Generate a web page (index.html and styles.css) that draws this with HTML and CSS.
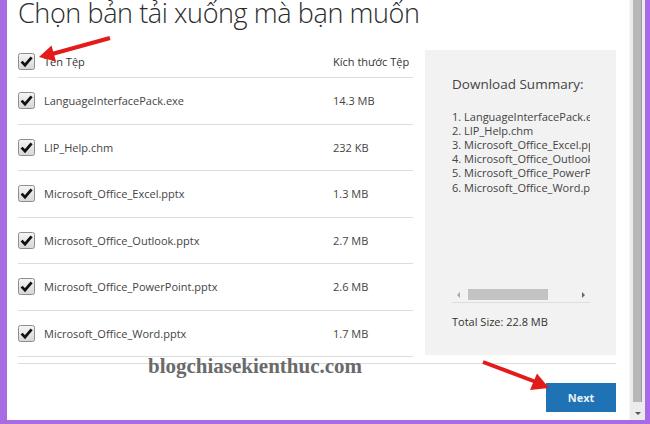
FILE: index.html
```html
<!DOCTYPE html>
<html lang="vi">
<head>
<meta charset="utf-8">
<link rel="stylesheet" href="styles.css">
</head>
<body>
<div class="page">
  <div class="window">
    <div class="content">
      <div class="title">Chọn bản tải xuống mà bạn muốn</div>
      <div class="main">
        <div class="list">
          <div class="row hdr">
            <span class="cb"><svg width="17" height="17" viewBox="0 0 17 17"><defs><linearGradient id="g" x1="0" y1="0" x2="0" y2="1"><stop offset="0" stop-color="#f6f6f6"/><stop offset="1" stop-color="#d6d6d6"/></linearGradient></defs><rect x="0.5" y="0.5" width="16" height="16" rx="2" fill="url(#g)" stroke="#8e8e8e"/><path d="M3.6 8.6 L7 12.2 L13.6 4.4" fill="none" stroke="#111" stroke-width="2.8"/></svg></span>
            <span class="name">Tên Tệp</span>
            <span class="size">Kích thước Tệp</span>
          </div>
          <div class="row"><span class="cb"><svg width="17" height="17" viewBox="0 0 17 17"><rect x="0.5" y="0.5" width="16" height="16" rx="2" fill="url(#g)" stroke="#8e8e8e"/><path d="M3.6 8.6 L7 12.2 L13.6 4.4" fill="none" stroke="#111" stroke-width="2.8"/></svg></span><span class="name">LanguageInterfacePack.exe</span><span class="size">14.3 MB</span></div>
          <div class="row"><span class="cb"><svg width="17" height="17" viewBox="0 0 17 17"><rect x="0.5" y="0.5" width="16" height="16" rx="2" fill="url(#g)" stroke="#8e8e8e"/><path d="M3.6 8.6 L7 12.2 L13.6 4.4" fill="none" stroke="#111" stroke-width="2.8"/></svg></span><span class="name">LIP_Help.chm</span><span class="size">232 KB</span></div>
          <div class="row"><span class="cb"><svg width="17" height="17" viewBox="0 0 17 17"><rect x="0.5" y="0.5" width="16" height="16" rx="2" fill="url(#g)" stroke="#8e8e8e"/><path d="M3.6 8.6 L7 12.2 L13.6 4.4" fill="none" stroke="#111" stroke-width="2.8"/></svg></span><span class="name">Microsoft_Office_Excel.pptx</span><span class="size">1.3 MB</span></div>
          <div class="row"><span class="cb"><svg width="17" height="17" viewBox="0 0 17 17"><rect x="0.5" y="0.5" width="16" height="16" rx="2" fill="url(#g)" stroke="#8e8e8e"/><path d="M3.6 8.6 L7 12.2 L13.6 4.4" fill="none" stroke="#111" stroke-width="2.8"/></svg></span><span class="name">Microsoft_Office_Outlook.pptx</span><span class="size">2.7 MB</span></div>
          <div class="row"><span class="cb"><svg width="17" height="17" viewBox="0 0 17 17"><rect x="0.5" y="0.5" width="16" height="16" rx="2" fill="url(#g)" stroke="#8e8e8e"/><path d="M3.6 8.6 L7 12.2 L13.6 4.4" fill="none" stroke="#111" stroke-width="2.8"/></svg></span><span class="name">Microsoft_Office_PowerPoint.pptx</span><span class="size">2.6 MB</span></div>
          <div class="row"><span class="cb"><svg width="17" height="17" viewBox="0 0 17 17"><rect x="0.5" y="0.5" width="16" height="16" rx="2" fill="url(#g)" stroke="#8e8e8e"/><path d="M3.6 8.6 L7 12.2 L13.6 4.4" fill="none" stroke="#111" stroke-width="2.8"/></svg></span><span class="name">Microsoft_Office_Word.pptx</span><span class="size">1.7 MB</span></div>
        </div>
        <div class="summary">
          <div class="sum-title">Download Summary:</div>
          <ol class="sum-list">
            <li>1. LanguageInterfacePack.exe</li>
            <li>2. LIP_Help.chm</li>
            <li>3. Microsoft_Office_Excel.pptx</li>
            <li>4. Microsoft_Office_Outlook.pptx</li>
            <li>5. Microsoft_Office_PowerPoint.pptx</li>
            <li>6. Microsoft_Office_Word.pptx</li>
          </ol>
          <div class="hscroll">
            <span class="arr-l"></span>
            <span class="hthumb"></span>
            <span class="arr-r"></span>
          </div>
          <div class="total">Total Size: 22.8 MB</div>
        </div>
      </div>
      <div class="footer">
        <button class="next">Next</button>
      </div>
    </div>
    <div class="vscroll">
      <div class="vthumb"></div>
      <div class="vdown"><span class="arr-d"></span></div>
    </div>
  </div>
  <div class="watermark">blogchiasekienthuc.com</div>
  <svg class="arrows" width="650" height="424" viewBox="0 0 650 424">
    <line x1="110" y1="38" x2="52" y2="54" stroke="#e31b1b" stroke-width="4"/>
    <polygon points="39,57 56,61.5 51.5,45.5" fill="#e31b1b"/>
    <line x1="483" y1="362" x2="536" y2="382" stroke="#e31b1b" stroke-width="4"/>
    <polygon points="549,388 530,390 537,373.5" fill="#e31b1b"/>
  </svg>
</div>
</body>
</html>
```
FILE: styles.css
```css
* { box-sizing: border-box; }
body {
  margin: 0;
  font-family: "Open Sans", "Noto Sans", sans-serif;
  color: #333;
}
.page {
  position: relative;
  width: 650px;
  height: 424px;
  background: #a96be4;
  padding: 0 5px 4px 7px;
  display: flex;
  overflow: hidden;
}
.window {
  flex: 1;
  display: flex;
  background: #fff;
}
.content {
  flex: 1;
  padding: 0 13px 0 11px;
  display: flex;
  flex-direction: column;
}
.title {
  height: 51px;
  margin-top: -1px;
  font-size: 27px;
  line-height: 28px;
  letter-spacing: -0.4px;
  font-weight: 300;
  color: #2b2b2b;
  white-space: nowrap;
}
.main {
  display: flex;
  gap: 12px;
  height: 305px;
}
.list {
  width: 395px;
}
.row {
  display: flex;
  align-items: center;
  height: 46.5px;
  border-bottom: 1px solid #dcdcdc;
  font-size: 11px;
  color: #444;
}
.row.hdr {
  height: 28px;
  padding-bottom: 4px;
  font-size: 11px;
  color: #333;
}
.cb {
  width: 26px;
  height: 17px;
  flex: none;
  display: flex;
}
.name {
  width: 289px;
  white-space: nowrap;
}
.size {
  white-space: nowrap;
}
.summary {
  width: 191px;
  background: #f2f2f2;
  padding: 25px 26px 26px 27px;
  display: flex;
  flex-direction: column;
  color: #444;
}
.sum-title {
  font-size: 13.5px;
  line-height: 18px;
}
.sum-list {
  list-style: none;
  margin: 16.5px 0 0;
  padding: 0;
  font-size: 11px;
  line-height: 14.2px;
}
.sum-list li {
  white-space: nowrap;
  overflow: hidden;
}
.hscroll {
  margin-top: auto;
  height: 15px;
  border-bottom: 1px solid #dedede;
  display: flex;
  align-items: center;
  padding-bottom: 1px;
}
.arr-l {
  width: 0; height: 0;
  margin: 0 8px 0 5px;
  border-top: 3px solid transparent;
  border-bottom: 3px solid transparent;
  border-right: 3px solid #a8a8a8;
}
.hthumb {
  width: 80px;
  height: 11px;
  background: #c3c3c3;
}
.arr-r {
  width: 0; height: 0;
  margin-left: auto;
  margin-right: 5px;
  border-top: 3px solid transparent;
  border-bottom: 3px solid transparent;
  border-left: 3px solid #666;
}
.total {
  margin-top: 12px;
  font-size: 11px;
  line-height: 14px;
  color: #333;
}
.footer {
  margin-top: 8px;
  border-top: 1px solid #dcdcdc;
  display: flex;
  justify-content: flex-end;
  padding-top: 19px;
}
.next {
  width: 70px;
  height: 29px;
  border: none;
  background: #1f72b3;
  color: #e8f1f8;
  font-family: "Open Sans", sans-serif;
  font-weight: 700;
  font-size: 11px;
  padding: 0;
}
.vscroll {
  width: 16px;
  background: #ececec;
  display: flex;
  flex-direction: column;
  padding: 0 3px;
  border-left: 1px solid #f6f6f6;
}
.vthumb {
  flex: 1;
  background: #b7b7b7;
  border-right: 1px solid #9d9d9d;
}
.vdown {
  height: 18px;
  display: flex;
  align-items: center;
  justify-content: center;
}
.arr-d {
  width: 0; height: 0;
  border-left: 3px solid transparent;
  border-right: 3px solid transparent;
  border-top: 3px solid #555;
  margin-top: 4px;
}
.watermark {
  position: absolute;
  left: 148px;
  top: 353px;
  font-family: "Liberation Serif", serif;
  font-weight: 700;
  font-size: 21px;
  line-height: 26px;
  color: #6a6a6a;
  white-space: nowrap;
}
.arrows {
  position: absolute;
  left: 0;
  top: 0;
  pointer-events: none;
}
```
